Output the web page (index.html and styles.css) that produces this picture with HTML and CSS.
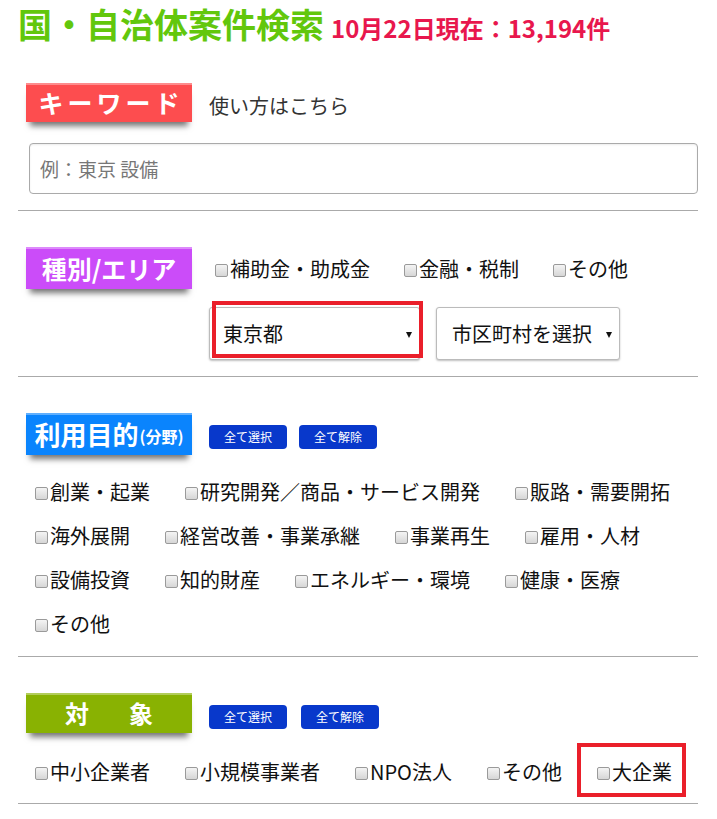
FILE: index.html
```html
<!DOCTYPE html>
<html lang="ja">
<head>
<meta charset="utf-8">
<title>国・自治体案件検索</title>
<link rel="stylesheet" href="styles.css">
</head>
<body>
<div class="page">
  <h1 class="title"><span class="title-main">国・自治体案件検索</span><span class="title-count">10月22日現在：13,194件</span></h1>

  <section class="section section-keyword">
    <div class="head">
      <div class="tag tag-red tag-spaced">キーワード</div>
      <a class="howto">使い方はこちら</a>
    </div>
    <input class="keyword" type="text" placeholder="例：東京 設備">
  </section>

  <section class="section section-area">
    <div class="head">
      <div class="tag tag-purple">種別/エリア</div>
      <div class="checks checks-type">
        <label class="check"><input type="checkbox">補助金・助成金</label>
        <label class="check"><input type="checkbox">金融・税制</label>
        <label class="check"><input type="checkbox">その他</label>
      </div>
    </div>
    <div class="selects">
      <div class="select-wrap select-pref">
        <select><option>東京都</option></select>
        <span class="annot annot-pref"></span>
      </div>
      <div class="select-wrap select-city">
        <select><option>市区町村を選択</option></select>
      </div>
    </div>
  </section>

  <section class="section section-purpose">
    <div class="head">
      <div class="tag tag-blue">利用目的<small>(分野)</small></div>
      <div class="btns">
        <button class="btn">全て選択</button>
        <button class="btn">全て解除</button>
      </div>
    </div>
    <div class="checks checks-list">
      <label class="check"><input type="checkbox">創業・起業</label>
      <label class="check"><input type="checkbox">研究開発／商品・サービス開発</label>
      <label class="check"><input type="checkbox">販路・需要開拓</label>
      <label class="check"><input type="checkbox">海外展開</label>
      <label class="check"><input type="checkbox">経営改善・事業承継</label>
      <label class="check"><input type="checkbox">事業再生</label>
      <label class="check"><input type="checkbox">雇用・人材</label>
      <label class="check"><input type="checkbox">設備投資</label>
      <label class="check"><input type="checkbox">知的財産</label>
      <label class="check"><input type="checkbox">エネルギー・環境</label>
      <label class="check"><input type="checkbox">健康・医療</label>
      <label class="check"><input type="checkbox">その他</label>
    </div>
  </section>

  <section class="section section-target">
    <div class="head">
      <div class="tag tag-green tag-wide">対　象</div>
      <div class="btns btns-wide">
        <button class="btn">全て選択</button>
        <button class="btn">全て解除</button>
      </div>
    </div>
    <div class="checks checks-list checks-target">
      <label class="check"><input type="checkbox">中小企業者</label>
      <label class="check"><input type="checkbox">小規模事業者</label>
      <label class="check"><input type="checkbox">NPO法人</label>
      <label class="check"><input type="checkbox">その他</label>
      <label class="check check-marked"><input type="checkbox">大企業<span class="annot annot-big"></span></label>
    </div>
  </section>
</div>
</body>
</html>
```

FILE: styles.css
```css
html, body {
  margin: 0;
  padding: 0;
  background: #fff;
}

body {
  font-family: "Noto Sans CJK JP", "Noto Sans", sans-serif;
  color: #111;
}

.page {
  width: 680px;
  padding: 0 19px 0 18px;
}

.title {
  margin: 0;
  padding-top: 7px;
  height: 40px;
  display: flex;
  align-items: baseline;
  line-height: 1;
  font-weight: 700;
}

.title-main {
  font-size: 34px;
  color: #62c70c;
}

.title-count {
  font-size: 24px;
  color: #e8174d;
  margin-left: 7px;
}

.section {
  border-bottom: 1px solid #aaa;
  padding: 36px 0 16px 8px;
}

.section-purpose {
  padding-bottom: 10px;
}

.section-target {
  padding-bottom: 9px;
}

.head {
  display: flex;
  align-items: center;
}

.tag {
  width: 166px;
  height: 42px;
  display: flex;
  align-items: center;
  justify-content: center;
  color: #fff;
  font-weight: 700;
  font-size: 25px;
  line-height: 1;
  box-shadow: inset 0 2px 0 rgba(255, 255, 255, 0.35), 0 8px 6px -4px rgba(0, 0, 0, 0.55);
  flex: none;
}

.tag-red {
  background: #fd4d4f;
  height: 39px;
}

.tag-purple {
  background: #cb4cf9;
}

.tag-blue {
  background: #0a84fd;
  font-size: 26px;
}

.tag-blue small {
  font-size: 16px;
  margin-left: 1px;
  margin-top: 4px;
}

.tag-green {
  background: #89b202;
  height: 40px;
  font-size: 24px;
}

.tag-spaced {
  letter-spacing: 4px;
  text-indent: 4px;
}

.tag-wide {
  letter-spacing: 8px;
  text-indent: 8px;
}

.howto {
  margin-left: 17px;
  font-size: 20px;
  color: #333;
  margin-top: 6px;
}

.keyword {
  display: block;
  box-sizing: border-box;
  margin: 21px 0 0 3px;
  width: 669px;
  height: 51px;
  border: 1px solid #aaa;
  border-radius: 4px;
  box-shadow: inset 0 1px 2px rgba(0, 0, 0, 0.08);
  padding: 0 10px;
  font-family: inherit;
  font-size: 19px;
  color: #333;
}

.keyword::placeholder {
  color: #777;
}

.checks {
  display: flex;
  flex-wrap: wrap;
}

.checks-type {
  margin-left: 23px;
  column-gap: 34px;
  margin-top: 2px;
}

.check {
  display: flex;
  align-items: center;
  font-size: 20px;
  line-height: 44px;
  color: #111;
  position: relative;
}

.checks-type .check {
  line-height: 30px;
}

.check input {
  -webkit-appearance: none;
  appearance: none;
  width: 13px;
  height: 13px;
  margin: 2px 2px 0 0;
  box-sizing: border-box;
  border: 1px solid #9a9a9a;
  border-radius: 2px;
  background: linear-gradient(#f4f4f4, #d6d6d6);
  flex: none;
}

.checks-list {
  margin-left: 9px;
  column-gap: 35px;
  margin-top: 15px;
}

.checks-target {
  margin-top: 17px;
}

.selects {
  display: flex;
  column-gap: 16px;
  margin: 18px 0 0 183px;
}

.select-wrap {
  position: relative;
}

.select-wrap select {
  display: block;
  -webkit-appearance: none;
  appearance: none;
  height: 53px;
  box-sizing: border-box;
  border: 1px solid #bbb;
  border-radius: 3px;
  background: #fff;
  box-shadow: 0 1px 2px rgba(0, 0, 0, 0.25);
  font-family: inherit;
  font-size: 20px;
  color: #111;
  padding: 0 20px 0 13px;
}

.select-pref select {
  width: 211px;
}

.select-city select {
  width: 184px;
  padding-left: 15px;
}

.select-wrap::after {
  content: "";
  position: absolute;
  right: 8px;
  top: 25px;
  border-left: 3px solid transparent;
  border-right: 3px solid transparent;
  border-top: 6px solid #111;
}

.btns {
  display: flex;
  column-gap: 12px;
  margin-left: 17px;
  margin-top: 6px;
}

.btns-wide {
  column-gap: 14px;
  margin-top: 8px;
}

.btn {
  width: 78px;
  height: 24px;
  border: none;
  border-radius: 4px;
  background: #0838cb;
  color: #fff;
  font-family: inherit;
  font-size: 12px;
  padding: 0;
  line-height: 24px;
}

.annot {
  position: absolute;
  border: 4px solid #ea1f2a;
  pointer-events: none;
}

.annot-pref {
  left: 3px;
  top: -6px;
  width: 211px;
  height: 57px;
  box-sizing: border-box;
}

.annot-big {
  left: -20px;
  right: -14px;
  top: -7px;
  bottom: -3px;
}
```
